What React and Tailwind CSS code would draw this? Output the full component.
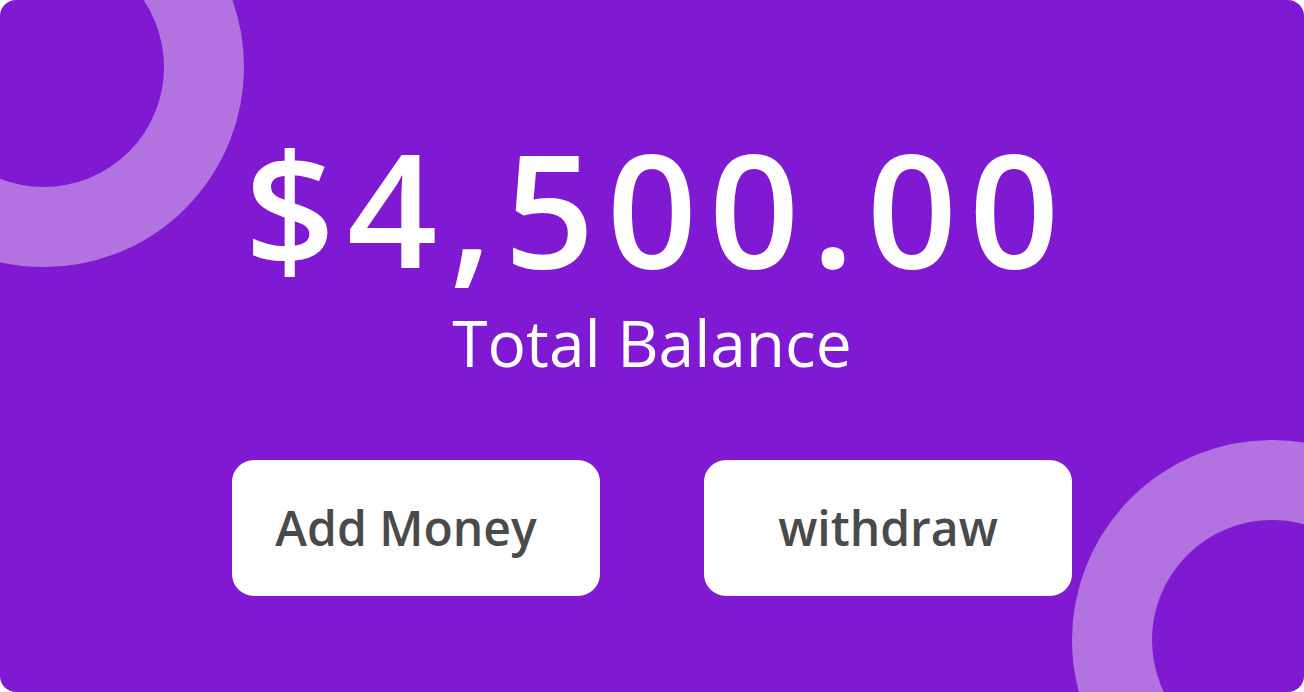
export default function App() {
    return (
        <div className="h-[692px] w-[1304px] bg-white">
            <div
                className="relative h-full w-full overflow-hidden rounded-2xl bg-[#801ad2]"
                style={{ fontFamily: '"Open Sans", "Noto Sans", sans-serif' }}
            >
                {/* decorative rings */}
                <div className="absolute left-[-156px] top-[-133px] h-[400px] w-[400px] rounded-full border-[80px] border-[#b273e0]"></div>
                <div className="absolute left-[1072px] top-[440px] h-[400px] w-[400px] rounded-full border-[80px] border-[#b273e0]"></div>

                <div className="relative flex flex-col items-center pt-[137px]">
                    <div className="ml-[12px] text-[158px] font-semibold leading-[140px] tracking-[12px] text-white">
                        $4,500.00
                    </div>
                    <div className="mt-[34px] text-[64px] leading-none text-white">
                        Total Balance
                    </div>
                    <div className="mt-[85px] flex gap-[104px]">
                        <button className="flex h-[136px] w-[368px] items-center justify-center rounded-[22px] bg-white pr-5 text-[48px] font-semibold text-[#4a4a4a]">
                            Add Money
                        </button>
                        <button className="flex h-[136px] w-[368px] items-center justify-center rounded-[22px] bg-white text-[48px] font-semibold text-[#4a4a4a]">
                            withdraw
                        </button>
                    </div>
                </div>
            </div>
        </div>
    );
}
